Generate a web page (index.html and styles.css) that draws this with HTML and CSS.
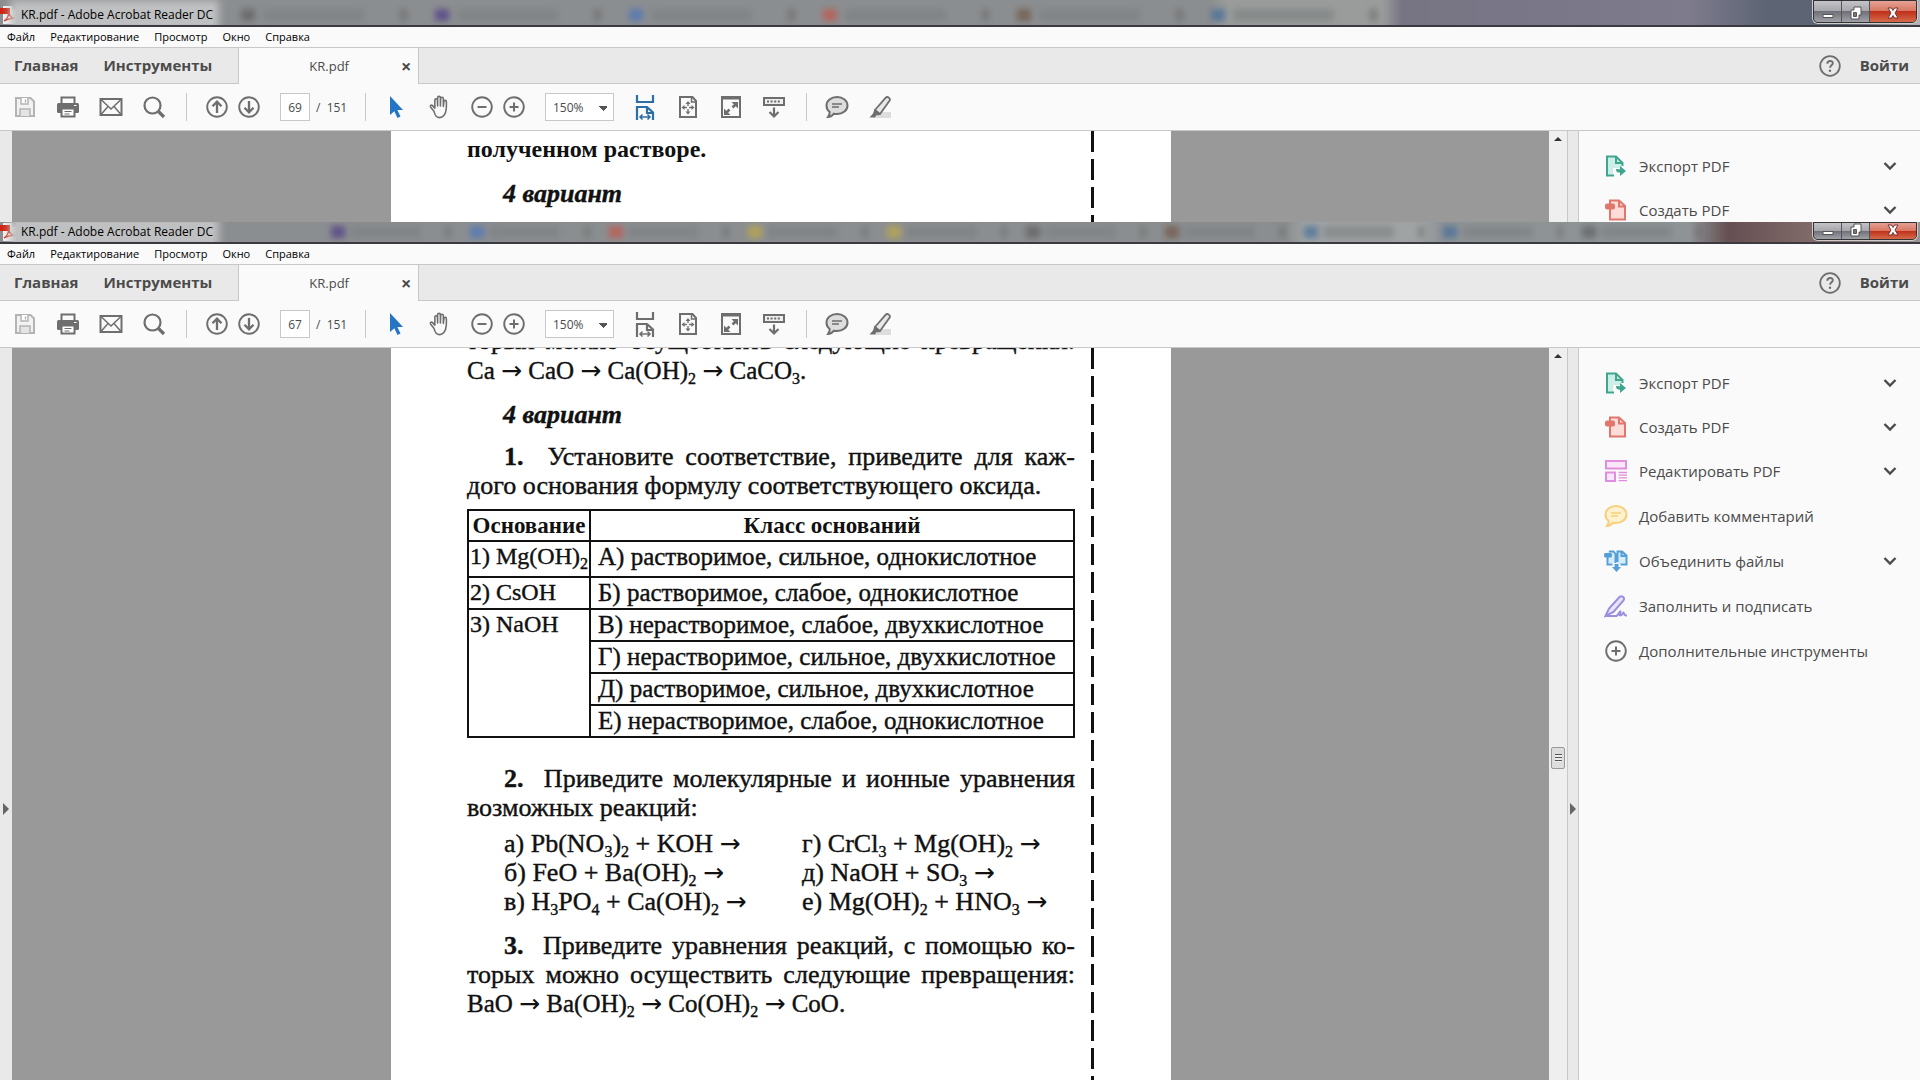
FILE: index.html
```html
<!DOCTYPE html>
<html lang="ru">
<head>
<meta charset="utf-8">
<title>KR.pdf - Adobe Acrobat Reader DC</title>
<link rel="stylesheet" href="styles.css">
</head>
<body>
<svg class="sprite" aria-hidden="true">
  <symbol id="i-app" viewBox="0 0 16 18"><path d="M3 0h9l4 4v14H3z" fill="#f3f1f1"/><path d="M12 0l4 4h-4z" fill="#bbb"/><path d="M0 2h10v6H0z" fill="#cf2313"/><path d="M4 15c3-2 5-5 4.500-9 1 4 3 6 6 6.500-4-.5-7 .5-10.500 2.500z" fill="none" stroke="#d8301c" stroke-width="1.200"/></symbol>
  <symbol id="i-save" viewBox="0 0 24 24"><path d="M3 3h14.500L21 6.500V21H3z" fill="#f2f2f2" stroke="#b4b4b4" stroke-width="2"/><path d="M7 21v-7h10v7" fill="#e4e4e4" stroke="#b4b4b4" stroke-width="1.500"/><path d="M8 3v6h7V3" fill="#fff" stroke="#b4b4b4" stroke-width="1.500"/><path d="M12.500 4.500v3" stroke="#b4b4b4" stroke-width="1.500"/></symbol>
  <symbol id="i-print" viewBox="0 0 24 24"><path d="M5.500 8V2.500h13V8" fill="#fafafa" stroke="#6e6e6e" stroke-width="2"/><rect x="1" y="8" width="22" height="10" rx="1.500" fill="#6e6e6e"/><path d="M5.500 13.500h13v8h-13z" fill="#fff" stroke="#6e6e6e" stroke-width="2"/><path d="M8.500 16.500h7M8.500 19h5" stroke="#6e6e6e"/><path d="M18 10.500h2.500" stroke="#fff"/></symbol>
  <symbol id="i-mail" viewBox="0 0 24 24"><path d="M1.500 4h21v16h-21z" fill="#fafafa" stroke="#6e6e6e" stroke-width="2"/><path d="M2 4.500l10 9.500 10-9.500M2 19.500l7-8M22 19.500l-7-8" fill="none" stroke="#6e6e6e" stroke-width="1.500"/></symbol>
  <symbol id="i-find" viewBox="0 0 24 24"><circle cx="10.500" cy="10.500" r="8" fill="none" stroke="#6e6e6e" stroke-width="2.200"/><path d="M16.500 16.500l5.500 5.500" stroke="#6e6e6e" stroke-width="3.200"/></symbol>
  <symbol id="i-up" viewBox="0 0 24 24"><circle cx="12" cy="12" r="9.800" fill="none" stroke="#6e6e6e" stroke-width="1.900"/><path d="M12 18V7M7.500 11.200L12 6.700l4.500 4.500" fill="none" stroke="#6e6e6e" stroke-width="2.300"/></symbol>
  <symbol id="i-down" viewBox="0 0 24 24"><circle cx="12" cy="12" r="9.800" fill="none" stroke="#6e6e6e" stroke-width="1.900"/><path d="M12 6v11M7.500 12.800l4.500 4.500 4.500-4.500" fill="none" stroke="#6e6e6e" stroke-width="2.300"/></symbol>
  <symbol id="i-minus" viewBox="0 0 24 24"><circle cx="12" cy="12" r="9.800" fill="none" stroke="#6e6e6e" stroke-width="1.900"/><path d="M7.500 12h9" stroke="#6e6e6e" stroke-width="2"/></symbol>
  <symbol id="i-plus" viewBox="0 0 24 24"><circle cx="12" cy="12" r="9.800" fill="none" stroke="#6e6e6e" stroke-width="1.900"/><path d="M7.500 12h9M12 7.500v9" stroke="#6e6e6e" stroke-width="2"/></symbol>
  <symbol id="i-arrow" viewBox="0 0 24 24"><path d="M6 1v19l4.300-3.800 3.200 6.800 3-1.400-3.100-6.600H19z" fill="#2575c4"/></symbol>
  <symbol id="i-hand" viewBox="0 0 24 26"><path d="M6.500 17.500L3 13.300c-1.200-1.600.7-3 2-1.800l2.500 2.700V5.500c0-2 2.600-2 2.800 0L10.500 12V3c0-2 3-2 3 0v9l.3-8c0-2 2.900-2 2.900 0v8.500l.6-5.500c.3-1.700 2.700-1.500 2.700.3 0 3.500.5 6.700-.8 11.200-1.500 5-4.200 6-7 6-3.200 0-4.700-2.800-5.700-7z" fill="#fafafa" stroke="#6e6e6e" stroke-width="1.700" stroke-linejoin="round"/></symbol>
  <symbol id="i-width" viewBox="0 0 20 26"><path d="M2 1v7h16V1" fill="none" stroke="currentColor" stroke-width="2.200"/><path d="M2 26V13h10l6 5.500V26M12 13v6h6" fill="none" stroke="currentColor" stroke-width="2.200"/><path d="M5 23h10M7.500 20.500L5 23l2.500 2.500M12.500 20.500L15 23l-2.500 2.500" fill="none" stroke="currentColor" stroke-width="1.500"/></symbol>
  <symbol id="i-page" viewBox="0 0 24 24"><path d="M4 2h12.500L20 6v16H4z" fill="#fafafa" stroke="#6e6e6e" stroke-width="2"/><path d="M15.500 2v5H20" fill="none" stroke="#6e6e6e" stroke-width="1.500"/><path d="M12 6l2.500 3h-5zM12 19.500l2.500-3h-5zM5.500 12.500l3-2.500v5zM18.500 12.500l-3-2.500v5z" fill="#6e6e6e"/><path d="M12 8v3M12 14v3M8 12.500h3M13 12.500h3" stroke="#6e6e6e" stroke-width="1.300"/></symbol>
  <symbol id="i-full" viewBox="0 0 24 24"><path d="M3 2h18v20H3z" fill="#fafafa" stroke="#6e6e6e" stroke-width="2"/><path d="M3 3h18" stroke="#6e6e6e" stroke-width="3"/><path d="M12.500 7H19v6.500zM5 13.500V20h6.500z" fill="#6e6e6e"/><path d="M17.500 8.500l-4 4M6.500 18.500l4-4" stroke="#6e6e6e" stroke-width="2.500"/></symbol>
  <symbol id="i-read" viewBox="0 0 24 24"><path d="M2 3h20v7H2z" fill="#eee" stroke="#6e6e6e" stroke-width="2"/><path d="M5 6.500h14" stroke="#6e6e6e" stroke-width="2" stroke-dasharray="2 1.600"/><path d="M12 12.500v8M7.500 17l4.500 4.500 4.500-4.500" fill="none" stroke="#6e6e6e" stroke-width="2.200"/></symbol>
  <symbol id="i-note" viewBox="0 0 24 24"><path d="M12 2c6 0 10.500 3.600 10.500 8.500S18 19 12 19c-1 0-2-.1-3-.3-1.500 2-3.500 3.300-6 3.300 1.200-1.700 1.800-3 1.700-5C2.500 15.400 1.500 13 1.500 10.500 1.500 5.600 6 2 12 2z" fill="var(--fill)" stroke="currentColor" stroke-width="2"/><path d="M7 9h10M7 12h7" stroke="currentColor" stroke-width="1.300"/></symbol>
  <symbol id="i-mark" viewBox="0 0 24 24"><path d="M11 17h12v6H5z" fill="#ddd"/><path d="M7 15L17.500 2.800c2-2 5.500.5 4 3L12 19z" fill="#e8e8e8" stroke="#6e6e6e" stroke-width="1.800"/><path d="M6.500 14l6 5.500-2.500 1-1.500-.5-1.500 2.500H1.500L5 18.500z" fill="#6e6e6e"/></symbol>
  <symbol id="i-help" viewBox="0 0 24 24"><circle cx="12" cy="12" r="9.800" fill="none" stroke="#6e6e6e" stroke-width="1.800"/><path d="M9.300 9.700c.1-3.800 5.800-3.500 5.500-.3-.2 1.900-2.700 2-2.700 4.300" fill="none" stroke="#6e6e6e" stroke-width="1.900"/><circle cx="12" cy="16.800" r="1.200" fill="#6e6e6e"/></symbol>
  <symbol id="i-export" viewBox="0 0 24 24"><path d="M3 2.500h9.500L18 8v6H9v7.500H3z" fill="#cdeee6"/><path d="M10 21.500H3v-19h9L18.500 9v3M12 2.500V9h6" fill="none" stroke="#3fa58d" stroke-width="2"/><path d="M12 15c0 3 1.500 3.500 4 3.500v3.500l6-5-6-5v3.200" fill="#3fa58d"/></symbol>
  <symbol id="i-create" viewBox="0 0 24 24"><path d="M6 2.500h9L21 8v13.500H6z" fill="#fbdcd9" stroke="#e0766c" stroke-width="2"/><path d="M15 2.500V8.500h6" fill="none" stroke="#e0766c" stroke-width="2"/><rect x="1" y="5.500" width="10" height="6" rx="2" fill="#e0766c"/></symbol>
  <symbol id="i-edit" viewBox="0 0 24 24"><path d="M2 2h20v7.500H2zM2 13.500h9V22H2z" fill="#fae6fa" stroke="#e08fdc" stroke-width="2"/><path d="M14.500 13.500H23M14.500 16.200H23M14.500 18.900H23M14.500 21.600H23" stroke="#e08fdc" stroke-width="1.300"/></symbol>
  <symbol id="i-merge" viewBox="0 0 24 24"><path d="M3.500 2h7v12h-7zM13 2h5.500L23 6v9H13z" fill="#d5edfa"/><path d="M3.500 8v7.500h5M5 2.500h4.500l2 2.500v9M13.500 13V2.500h4.500l4.500 4v9h-6M17.500 2.500v4.500h5" fill="none" stroke="#549fd6" stroke-width="2"/><rect x="0" y="4" width="8" height="4.500" rx="1.500" fill="#549fd6"/><path d="M10.500 15v3H8l4.500 5 4.500-5h-2.500v-3z" fill="#549fd6"/></symbol>
  <symbol id="i-sign" viewBox="0 0 24 24"><path d="M1.500 22L5 14.500 15.500 3c2-2 5.800.5 4 3.500L9.500 18z" fill="#e8e4fa" stroke="#9b8fe0" stroke-width="2"/><path d="M1.500 22H12c2 0 4-5.500 4.500-4.500s-2 4 0 4 2-3 3-3-.5 3.500 3.500 3" fill="none" stroke="#9b8fe0" stroke-width="2"/></symbol>
  <symbol id="i-chev" viewBox="0 0 14 10"><path d="M1.500 2L7 7.500 12.500 2" fill="none" stroke="#4b4b4b" stroke-width="2.400"/></symbol>
  <symbol id="i-min" viewBox="0 0 14 14"><path d="M2 8.500h10v3H2z" fill="#fff" stroke="#555"/></symbol>
  <symbol id="i-rest" viewBox="0 0 14 14"><path d="M5 1h7v8h-2v4H2V4h3z" fill="#fff" stroke="#555"/><path d="M4.500 6.500h3v4h-3z" fill="#777" stroke="#555"/></symbol>
  <symbol id="i-close" viewBox="0 0 14 14"><path d="M2 2h3.500L7 4.500 8.500 2H12L9 7l3 5H8.500L7 9.500 5.500 12H2l3-5z" fill="#fff" stroke="#733"/></symbol>
</svg>

<main class="screen">
  <section class="window window-back">
    <header class="titlebar">
      <svg class="app"><use href="#i-app"/></svg>
      <span class="caption">KR.pdf - Adobe Acrobat Reader DC</span>
      <span class="glass" aria-hidden="true"><i class="g1"></i><i class="g2"></i><i class="g3"></i><i class="g4"></i><i class="g5"></i><i class="g6"></i></span>
      <span class="controls"><button aria-label="Свернуть"><svg><use href="#i-min"/></svg></button><button aria-label="Восстановить"><svg><use href="#i-rest"/></svg></button><button class="close" aria-label="Закрыть"><svg><use href="#i-close"/></svg></button></span>
    </header>
    <nav class="menu"><button>Файл</button><button>Редактирование</button><button>Просмотр</button><button>Окно</button><button>Справка</button></nav>
    <div class="tabs">
      <button class="home">Главная</button><button class="home">Инструменты</button>
      <div class="tab"><span>KR.pdf</span><button aria-label="Закрыть вкладку">×</button></div>
      <button class="help" aria-label="Справка"><svg><use href="#i-help"/></svg></button><button class="login">Войти</button>
    </div>
    <div class="toolbar">
      <button aria-label="Сохранить"><svg><use href="#i-save"/></svg></button>
      <button class="t-print" aria-label="Печать"><svg><use href="#i-print"/></svg></button>
      <button class="t-print" aria-label="Почта"><svg><use href="#i-mail"/></svg></button>
      <button class="t-print" aria-label="Поиск"><svg><use href="#i-find"/></svg></button>
      <span class="sep"></span>
      <button aria-label="Предыдущая"><svg><use href="#i-up"/></svg></button>
      <button class="t-near" aria-label="Следующая"><svg><use href="#i-down"/></svg></button>
      <input class="page-no" aria-label="Страница" value="69"><span class="total">/&nbsp; 151</span>
      <span class="sep"></span>
      <button aria-label="Выделение"><svg><use href="#i-arrow"/></svg></button>
      <button class="t-print" aria-label="Рука"><svg><use href="#i-hand"/></svg></button>
      <button class="t-print" aria-label="Уменьшить"><svg><use href="#i-minus"/></svg></button>
      <button class="t-near" aria-label="Увеличить"><svg><use href="#i-plus"/></svg></button>
      <select class="zoom" aria-label="Масштаб"><option>150%</option></select>
      <button class="t-fit on" aria-label="По ширине"><svg><use href="#i-width"/></svg></button>
      <button class="t-print" aria-label="Страница целиком"><svg><use href="#i-page"/></svg></button>
      <button class="t-print" aria-label="Во весь экран"><svg><use href="#i-full"/></svg></button>
      <button class="t-print" aria-label="Режим чтения"><svg><use href="#i-read"/></svg></button>
      <span class="sep"></span>
      <button class="note" aria-label="Комментарий"><svg><use href="#i-note"/></svg></button>
      <button class="t-print" aria-label="Маркер"><svg><use href="#i-mark"/></svg></button>
    </div>
    <div class="body">
      <div class="gutter"></div>
      <div class="canvas">
        <article class="paper">
          <div class="text">
            <p class="end">полученном растворе.</p>
            <h2>4 вариант</h2>
          </div>
        </article>
      </div>
      <div class="scroll"><i class="up"></i></div>
      <div class="gutter right"></div>
      <aside class="panel">
        <button><svg><use href="#i-export"/></svg>Экспорт PDF<svg class="chev"><use href="#i-chev"/></svg></button>
        <button><svg><use href="#i-create"/></svg>Создать PDF<svg class="chev"><use href="#i-chev"/></svg></button>
      </aside>
    </div>
  </section>

  <section class="window window-front">
    <header class="titlebar">
      <svg class="app"><use href="#i-app"/></svg>
      <span class="caption">KR.pdf - Adobe Acrobat Reader DC</span>
      <span class="glass" aria-hidden="true"><i class="g2"></i><i class="g3"></i><i class="g4"></i><i class="g7"></i><i class="g7"></i><i class="g1"></i><i class="g5"></i><i class="g6"></i><i class="g6"></i><i class="g1"></i></span>
      <span class="controls"><button aria-label="Свернуть"><svg><use href="#i-min"/></svg></button><button aria-label="Восстановить"><svg><use href="#i-rest"/></svg></button><button class="close" aria-label="Закрыть"><svg><use href="#i-close"/></svg></button></span>
    </header>
    <nav class="menu"><button>Файл</button><button>Редактирование</button><button>Просмотр</button><button>Окно</button><button>Справка</button></nav>
    <div class="tabs">
      <button class="home">Главная</button><button class="home">Инструменты</button>
      <div class="tab"><span>KR.pdf</span><button aria-label="Закрыть вкладку">×</button></div>
      <button class="help" aria-label="Справка"><svg><use href="#i-help"/></svg></button><button class="login">Войти</button>
    </div>
    <div class="toolbar">
      <button aria-label="Сохранить"><svg><use href="#i-save"/></svg></button>
      <button class="t-print" aria-label="Печать"><svg><use href="#i-print"/></svg></button>
      <button class="t-print" aria-label="Почта"><svg><use href="#i-mail"/></svg></button>
      <button class="t-print" aria-label="Поиск"><svg><use href="#i-find"/></svg></button>
      <span class="sep"></span>
      <button aria-label="Предыдущая"><svg><use href="#i-up"/></svg></button>
      <button class="t-near" aria-label="Следующая"><svg><use href="#i-down"/></svg></button>
      <input class="page-no" aria-label="Страница" value="67"><span class="total">/&nbsp; 151</span>
      <span class="sep"></span>
      <button aria-label="Выделение"><svg><use href="#i-arrow"/></svg></button>
      <button class="t-print" aria-label="Рука"><svg><use href="#i-hand"/></svg></button>
      <button class="t-print" aria-label="Уменьшить"><svg><use href="#i-minus"/></svg></button>
      <button class="t-near" aria-label="Увеличить"><svg><use href="#i-plus"/></svg></button>
      <select class="zoom" aria-label="Масштаб"><option>150%</option></select>
      <button class="t-fit" aria-label="По ширине"><svg><use href="#i-width"/></svg></button>
      <button class="t-print" aria-label="Страница целиком"><svg><use href="#i-page"/></svg></button>
      <button class="t-print" aria-label="Во весь экран"><svg><use href="#i-full"/></svg></button>
      <button class="t-print" aria-label="Режим чтения"><svg><use href="#i-read"/></svg></button>
      <span class="sep"></span>
      <button class="note" aria-label="Комментарий"><svg><use href="#i-note"/></svg></button>
      <button class="t-print" aria-label="Маркер"><svg><use href="#i-mark"/></svg></button>
    </div>
    <div class="body">
      <div class="gutter"><i class="tri"></i></div>
      <div class="canvas">
        <article class="paper">
          <div class="text">
            <p class="cut full">торых можно осуществить следующие превращения:</p>
            <p class="formula">Ca <i>→</i> CaO <i>→</i> Ca(OH)<sub>2</sub> <i>→</i> CaCO<sub>3</sub>.</p>
            <h2>4 вариант</h2>
            <p class="full indent"><b>1.</b>&nbsp; Установите соответствие, приведите для каж-</p>
            <p>дого основания формулу соответствующего оксида.</p>
            <table>
              <thead><tr><th>Основание</th><th>Класс оснований</th></tr></thead>
              <tbody>
                <tr class="tall"><td class="base">1) Mg(OH)<sub>2</sub></td><td>А) растворимое, сильное, однокислотное</td></tr>
                <tr><td class="base">2) CsOH</td><td>Б) растворимое, слабое, однокислотное</td></tr>
                <tr><td class="base" rowspan="4">3) NaOH</td><td>В) нерастворимое, слабое, двухкислотное</td></tr>
                <tr><td>Г) нерастворимое, сильное, двухкислотное</td></tr>
                <tr><td>Д) растворимое, сильное, двухкислотное</td></tr>
                <tr><td>Е) нерастворимое, слабое, однокислотное</td></tr>
              </tbody>
            </table>
            <p class="full indent"><b>2.</b>&nbsp; Приведите молекулярные и ионные уравнения</p>
            <p>возможных реакций:</p>
            <div class="pairs">
              <p>а) Pb(NO<sub>3</sub>)<sub>2</sub> + KOH <i>→</i></p><p>г) CrCl<sub>3</sub> + Mg(OH)<sub>2</sub> <i>→</i></p>
              <p>б) FeO + Ba(OH)<sub>2</sub> <i>→</i></p><p>д) NaOH + SO<sub>3</sub> <i>→</i></p>
              <p>в) H<sub>3</sub>PO<sub>4</sub> + Ca(OH)<sub>2</sub> <i>→</i></p><p>е) Mg(OH)<sub>2</sub> + HNO<sub>3</sub> <i>→</i></p>
            </div>
            <p class="full indent"><b>3.</b>&nbsp; Приведите уравнения реакций, с помощью ко-</p>
            <p class="full">торых можно осуществить следующие превращения:</p>
            <p class="formula">BaO <i>→</i> Ba(OH)<sub>2</sub> <i>→</i> Co(OH)<sub>2</sub> <i>→</i> CoO.</p>
          </div>
        </article>
      </div>
      <div class="scroll"><i class="up"></i><i class="thumb"></i></div>
      <div class="gutter right"><i class="tri"></i></div>
      <aside class="panel">
        <button><svg><use href="#i-export"/></svg>Экспорт PDF<svg class="chev"><use href="#i-chev"/></svg></button>
        <button><svg><use href="#i-create"/></svg>Создать PDF<svg class="chev"><use href="#i-chev"/></svg></button>
        <button><svg><use href="#i-edit"/></svg>Редактировать PDF<svg class="chev"><use href="#i-chev"/></svg></button>
        <button class="yellow"><svg><use href="#i-note"/></svg>Добавить комментарий</button>
        <button><svg><use href="#i-merge"/></svg>Объединить файлы<svg class="chev"><use href="#i-chev"/></svg></button>
        <button><svg><use href="#i-sign"/></svg>Заполнить и подписать</button>
        <button><svg><use href="#i-plus"/></svg>Дополнительные инструменты</button>
      </aside>
    </div>
  </section>
</main>
</body>
</html>
```
FILE: styles.css
```css
* { box-sizing: border-box; }
body { margin: 0; font-family: "Open Sans", "Noto Sans", sans-serif; color: #4b4b4b; background: #fafafa; }
button { border: 0; padding: 0; margin: 0; background: none; font: inherit; color: inherit; }
.sprite { position: absolute; width: 0; height: 0; }
svg { display: block; flex: none; }

.screen { display: flex; flex-direction: column; height: 100vh; overflow: hidden; }
.window { display: flex; flex-direction: column; overflow: hidden; }
.window-back { flex: 0 0 222px; }
.window-front { flex: 1; min-height: 0; }

/* title bar */
.titlebar { display: flex; align-items: center; flex: none; height: 27px; overflow: hidden; border-bottom: 2px solid #3b3a40; background: linear-gradient(90deg, #8b8e90 0, #8b8e90 63%, #999c9a 64%, #999c9a 72%, #777584 73%, #7d7b8c 88%, #5d6474 92%, #5d6474 96%, #b9b3b6); padding-top: 5px; }
.window-front .titlebar { height: 22px; padding-top: 0; background: linear-gradient(90deg, #8b8e90 0, #8b8e90 67%, #a0a3a3 68%, #a0a3a3 74%, #8e9396 75%, #8e9396 88%, #654f52 90%, #8b7472 96%, #9b9294); }
.app { width: 16px; height: 18px; }
.caption { margin-right: 8px; padding-left: 5px; font-size: 12px; line-height: 18px; color: #000; background: #bfc0c1; box-shadow: 0 0 8px 6px #bfc0c1; white-space: nowrap; }
.glass { flex: 1; display: flex; min-width: 0; padding-left: 20px; filter: blur(3px); opacity: .6; overflow: hidden; }
.glass i { flex: none; width: 194px; height: 12px; border-left: 14px solid #555; background: linear-gradient(90deg, transparent 4%, #7b7f81 5%, #7b7f81 60%, transparent 61%, transparent 80%, #666 81%, #666 84%, transparent 85%); }
.window-front .glass { padding-left: 110px; }
.window-front .glass i { width: 139px; }
.glass .g2 { border-color: #432a86; }
.glass .g3 { border-color: #3f6fc4; }
.glass .g4 { border-color: #d14a3c; }
.glass .g5 { border-color: #6a4a35; }
.glass .g6 { border-color: #33649a; }
.glass .g7 { border-color: #c9b03a; }
.controls { display: flex; flex: none; align-self: flex-start; margin: -5px 3px 0 0; height: 23px; border: 1px solid #333; border-radius: 0 0 5px 5px; overflow: hidden; box-shadow: 0 0 0 1px #ccc; }
.window-front .controls { margin-top: 0; height: 18px; }
.controls button { display: flex; align-items: flex-end; justify-content: center; padding-bottom: 2px; width: 28px; border-right: 1px solid #555; background: linear-gradient(#c4c3c7, #a5a5aa 50%, #6f7078 50%, #a0a2a8); }
.controls .close { width: 46px; border: 0; background: linear-gradient(#e5a296, #d8755f 50%, #c0301a 50%, #d66a4a); }
.controls svg { width: 14px; height: 14px; }

/* menu and tabs */
.menu { display: flex; flex: none; align-items: center; gap: 15px; height: 20px; padding-left: 7px; font-size: 11px; line-height: 18px; color: #000; background: #fafafa; }
.tabs { display: flex; flex: none; height: 37px; border-top: 1px solid #c8c8c8; background: #e9e9e9; font-size: 15px; align-items: stretch; }
.tabs > button { border-bottom: 1px solid #c8c8c8; white-space: nowrap; }
.home { font-weight: 700; padding: 0 0 2px 14px; }
.home + .home { padding: 0 26px 2px 25px; }
.tab { display: flex; align-items: center; width: 181px; padding: 0 7px 0 70px; border: solid #c8c8c8; border-width: 0 1px; background: #fafafa; font-size: 13px; }
.tab span { flex: 1; }
.tab button { font-size: 18px; font-weight: 700; line-height: 18px; }
.help { flex: 1; display: flex; justify-content: flex-end; align-items: center; padding-right: 18px; }
.help svg { width: 24px; height: 24px; }
.login { padding: 0 11px 2px 0; font-weight: 700; }

/* toolbar */
.toolbar { display: flex; flex: none; align-items: center; height: 47px; padding-left: 13px; border-bottom: 1px solid #c8c8c8; background: #fafafa; font-size: 12px; }
.toolbar button, .toolbar button svg { width: 24px; height: 24px; }
.toolbar .t-print { margin-left: 19px; }
.toolbar .t-near { margin-left: 8px; }
.toolbar .t-fit { margin-left: 19px; color: #6e6e6e; }
.toolbar .on { color: #2c6ea5; }
.toolbar .t-fit, .toolbar .t-fit svg { height: 26px; }
.toolbar .note { color: #6e6e6e; --fill: #ddd; }
.sep { width: 1px; height: 28px; margin: 0 18px 0 20px; background: #c8c8c8; }
.page-no { width: 30px; height: 28px; margin-left: 19px; padding: 0; border: 1px solid #c8c8c8; background: #fff; font: inherit; color: #4b4b4b; text-align: center; }
.total { width: 29px; margin-left: 6px; white-space: nowrap; }
.zoom { width: 69px; height: 28px; margin-left: 19px; padding: 0 7px; appearance: none; border: 1px solid #c8c8c8; border-radius: 0; font: inherit; color: #4b4b4b; background: conic-gradient(from -45deg at 50% 100%, #555 90deg, transparent 0) 53px 12px / 8px 5px no-repeat #fff; }

/* document area */
.body { display: flex; flex: 1; min-height: 0; }
.gutter { display: flex; flex: none; align-items: center; justify-content: center; width: 12px; background: #e9e9e9; }
.gutter.right { border: solid #c8c8c8; border-width: 0 1px; }
.canvas { flex: 1; min-width: 0; display: flex; overflow: hidden; background: #999; padding-left: 379px; }
.paper { flex: none; width: 780px; padding: 0 76px; background: linear-gradient(#111 75%, #fff 0) 700px 0 / 3px 28px repeat-y #fff; }
.text { width: 608px; font: 26px/29px "Liberation Serif", serif; color: #111; -webkit-text-stroke: 0.4px #111; }
.text p { margin: 0; white-space: nowrap; }
.text .formula { font-size: 25px; }
.text i { font: 25px/1 "DejaVu Sans", sans-serif; -webkit-text-stroke: 0; }
.text sub { font-size: 16px; line-height: 0; vertical-align: -5px; }
.text h2 { margin: 15px 0 13px; padding-left: 36px; font: italic 700 26px/29px "Liberation Serif", serif; }
.text .end { padding-top: 4px; font-size: 24px; font-weight: 700; -webkit-text-stroke: 0; }
.text .full { white-space: normal; text-align: justify; text-align-last: justify; }
.text .indent { padding-left: 37px; }
.text .cut { margin-top: -22px; padding-bottom: 1px; }
.tri { margin-top: 190px; border: 6px solid transparent; border-left-color: #666; border-right: 0; }
.scroll { flex: none; display: flex; flex-direction: column; align-items: center; width: 18px; background: #efefef; }
.up { margin-top: 6px; border: 4px solid transparent; border-top: 0; border-bottom-color: #333; }
.thumb { width: 14px; height: 22px; margin-top: 389px; border: 1px solid #999; border-radius: 2px; background: repeating-linear-gradient(#555 0 1px, #eee 1px 3px) center / 7px 8px no-repeat #ddd; }

table { width: 608px; margin: 9px 0 26px; border-collapse: collapse; table-layout: fixed; font-size: 25px; }
th, td { height: 32px; padding: 0 0 0 7px; border: 2px solid #111; line-height: 29px; white-space: nowrap; text-align: left; vertical-align: top; }
th { height: 31px; padding: 0; font-size: 23px; text-align: center; -webkit-text-stroke: 0; }
th:first-child { width: 122px; }
td.base { padding-left: 1px; font-size: 24px; }
.tall td { height: 36px; }
.pairs { display: grid; grid-template-columns: 298px 1fr; margin: 7px 0 15px; padding-left: 37px; }

/* tools panel */
.panel { flex: none; width: 341px; padding: 13px 23px 0 25px; background: #fafafa; font-size: 15px; }
.panel button { display: flex; align-items: center; gap: 11px; width: 100%; height: 45px; white-space: nowrap; }
.panel button:nth-child(-n+3) { height: 44px; }
.panel svg { width: 24px; height: 24px; }
.panel .chev { width: 14px; height: 10px; margin-left: auto; }
.yellow { --fill: #fdf1cf; }
.yellow svg { color: #f7cf7a; }
```
